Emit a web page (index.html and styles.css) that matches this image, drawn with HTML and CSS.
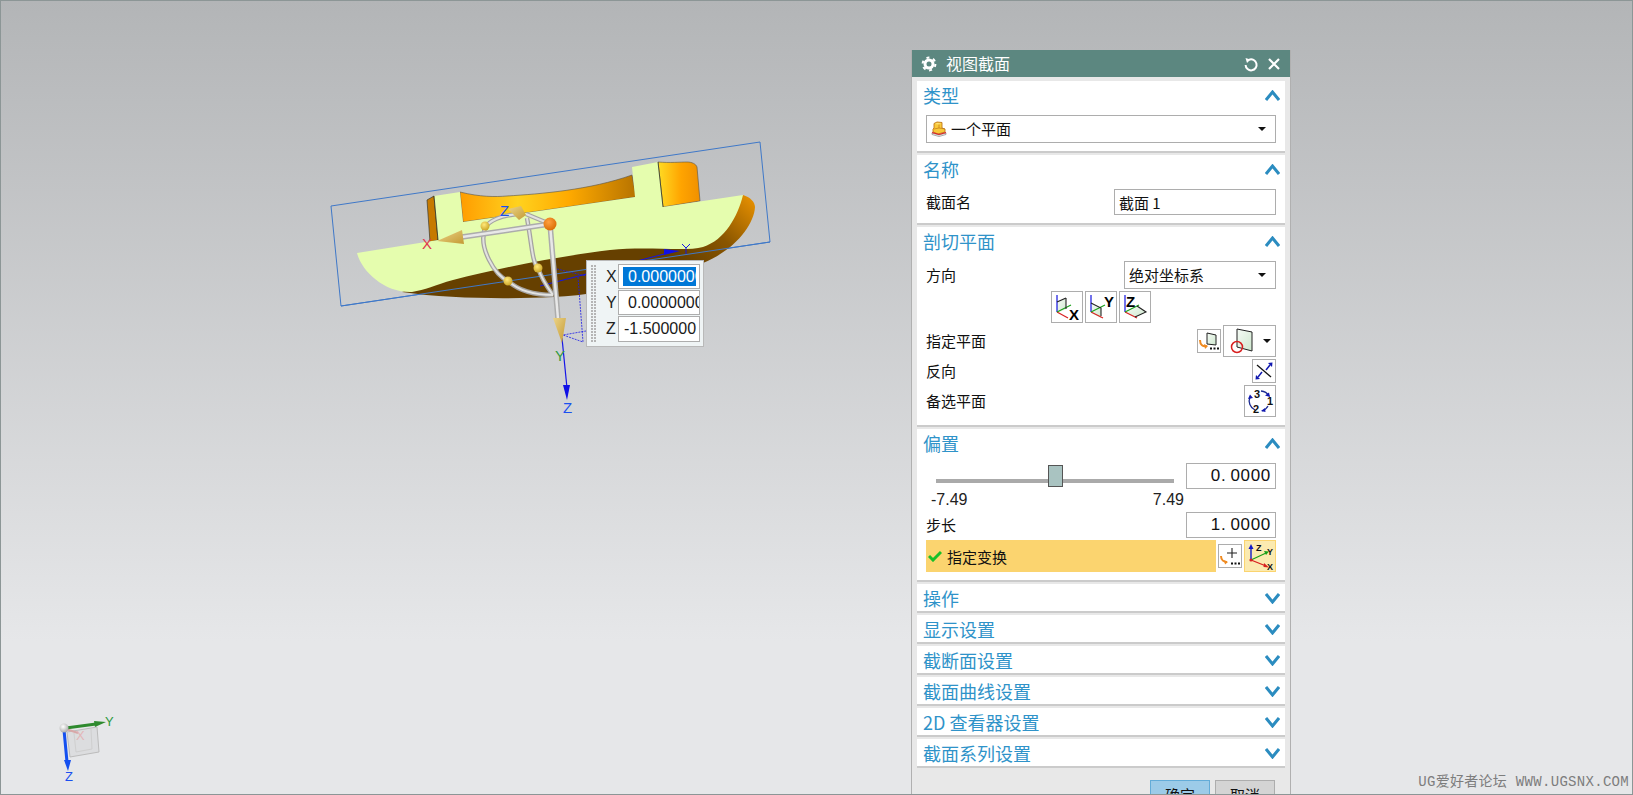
FILE: index.html
```html
<!DOCTYPE html>
<html lang="zh">
<head>
<meta charset="utf-8">
<title>视图截面</title>
<link rel="stylesheet" href="styles.css">
</head>
<body>
<main class="viewport">
  <svg class="scene" width="1633" height="795" viewBox="0 0 1633 795">
    <defs>
      <linearGradient id="band" gradientUnits="userSpaceOnUse" x1="460" y1="0" x2="635" y2="0">
        <stop offset="0" stop-color="#ff9c00"/><stop offset=".33" stop-color="#ffd21e"/><stop offset=".62" stop-color="#ffaa00"/><stop offset="1" stop-color="#b87400"/>
      </linearGradient>
      <linearGradient id="band2" gradientUnits="userSpaceOnUse" x1="658" y1="0" x2="700" y2="0">
        <stop offset="0" stop-color="#ffdc24"/><stop offset=".55" stop-color="#ffa400"/><stop offset="1" stop-color="#f09000"/>
      </linearGradient>
      <linearGradient id="rim" gradientUnits="userSpaceOnUse" x1="755" y1="205" x2="690" y2="270">
        <stop offset="0" stop-color="#e08c00"/><stop offset=".5" stop-color="#8a5600"/><stop offset="1" stop-color="#664000"/>
      </linearGradient>
      <linearGradient id="cone" x1="0" y1="0" x2="1" y2="1">
        <stop offset="0" stop-color="#ecd488"/><stop offset="1" stop-color="#c49a34"/>
      </linearGradient>
      <linearGradient id="planefill" x1="0" y1="0" x2="1" y2="1">
        <stop offset="0" stop-color="#f6fbf6"/><stop offset="1" stop-color="#cfe8cf"/>
      </linearGradient>
      <radialGradient id="ball" cx=".4" cy=".35" r=".7"><stop offset="0" stop-color="#ffe97a"/><stop offset="1" stop-color="#c9a222"/></radialGradient>
      <radialGradient id="ball2" cx=".4" cy=".35" r=".7"><stop offset="0" stop-color="#ffa040"/><stop offset="1" stop-color="#d86a00"/></radialGradient>
      <radialGradient id="ball3" cx=".4" cy=".35" r=".7"><stop offset="0" stop-color="#ffffff"/><stop offset="1" stop-color="#a8a8a8"/></radialGradient>
    </defs>

    <polygon class="bbox" points="331,206 760,142 770,242 341,306"/>

    <path class="band-left" d="M427 200L434 196L438 240L430 242Z"/>
    <path class="band-mid" d="M460 192C480 197 495 197 507 196C540 194 590 190 632 175L636 197L463 222Z"/>
    <path class="band-right" d="M658 162C670 163 680 162 687 162C692 162 696 164 697 167L700 201L663 207Z"/>
    <path class="rim" d="M743 195C750 197 755 202 755 207C754 225 735 250 703 263C660 275 620 294 553 297C510 299 450 299 402 292L500 250L703 240Z"/>
    <path class="face" d="M357 253L438 240L434 196L460 192L463 222L635 197L632 167L658 162L663 207L743 195C738 216 725 240 703 247C685 252 650 246 610 250C560 256 500 268 453 280C435 285 425 290 412 292C385 293 362 272 357 253Z"/>
    <path class="edge" d="M438 240L434 196M658 162L663 207"/>

    <path class="blue-thin" d="M540 286L668 253"/>
    <polygon class="blue-fill" points="664,249 680,251 664,255"/>
    <path class="blue-thin" d="M686 247L686 254M682 244L686 248L690 244"/>
    <path class="blue-dash" d="M557 269L586 276M578 277L583 342L563 335L586 331"/>
    <path class="blue-line" d="M562 338L567 388"/>
    <polygon class="blue-fill" points="563,385 570,385 567,400"/>
    <line class="bbox-over" x1="341" y1="306" x2="770" y2="242"/>

    <path class="arc" d="M524 214C500 214 488 222 485 228C478 248 495 275 508 281C520 292 535 295 553 295"/>
    <path class="arc" d="M527 218C532 245 532 262 538 268C542 280 548 288 553 295"/>
    <path class="arc" d="M526 214L550 224"/>
    <path class="arc-in" d="M524 214C500 214 488 222 485 228C478 248 495 275 508 281C520 292 535 295 553 295"/>
    <path class="arc-in" d="M527 218C532 245 532 262 538 268C542 280 548 288 553 295"/>
    <path class="arc-in" d="M526 214L550 224"/>
    <path class="shaft" d="M550 224L462 237"/>
    <path class="shaft" d="M550 224L558 319"/>
    <path class="shaft-in" d="M550 224L462 237"/>
    <path class="shaft-in" d="M550 224L558 319"/>
    <polygon class="cone" points="462,230 464,244 437,241"/>
    <polygon class="cone" points="508,209 521,206 526,215 519,220"/>
    <polygon class="cone" points="553,318 566,318 562,343"/>
    <circle cx="550" cy="224" r="6.5" fill="url(#ball2)"/>
    <circle cx="485" cy="226" r="4.5" fill="url(#ball)"/>
    <circle cx="538" cy="268" r="4.5" fill="url(#ball)"/>
    <circle cx="508" cy="281" r="4.5" fill="url(#ball)"/>
    <text class="lbl lbl-red" x="422" y="249">X</text>
    <text class="lbl lbl-blue" x="500" y="216">Z</text>
    <text class="lbl lbl-green" x="555" y="361">Y</text>
    <text class="lbl lbl-blue" x="563" y="413">Z</text>

    <g class="triad">
      <polygon class="tri-box" points="67,732 97,727 99,752 70,757"/>
      <path class="tri-in" d="M74 733L76 752M76 752L92 749M92 749L91 729"/>
      <path class="tri-red" d="M66 729L78 733"/>
      <text class="lbl-tri lbl-faint" x="76" y="740">X</text>
      <path class="tri-green" d="M66 728L96 724"/>
      <polygon class="tri-gfill" points="94,721 106,722 95,727"/>
      <path class="tri-blue" d="M64 730L67 762"/>
      <polygon class="tri-bfill" points="64,760 71,760 68,771"/>
      <circle cx="64" cy="728" r="4.5" fill="url(#ball3)"/>
      <text class="lbl-tri lbl-green" x="105" y="726">Y</text>
      <text class="lbl-tri lbl-blue" x="65" y="781">Z</text>
    </g>
  </svg>

  <div class="coords">
    <div class="grip"></div>
    <div class="coord-rows">
      <div class="coord-row"><span class="coord-label">X</span><div class="coord-input coord-sel"><span class="selected">0.0000000</span></div></div>
      <div class="coord-row"><span class="coord-label">Y</span><div class="coord-input"><span>0.0000000</span></div></div>
      <div class="coord-row"><span class="coord-label">Z</span><div class="coord-input coord-neg"><span>-1.500000</span></div></div>
    </div>
  </div>

  <aside class="dialog">
    <header class="dialog-title">
      <svg class="gear" width="16" height="16" viewBox="0 0 16 16"><circle cx="8" cy="8" r="4" class="gear-ring"/><circle cx="8" cy="8" r="6.400" class="gear-teeth"/></svg>
      <span class="dialog-name">视图截面</span>
      <svg class="tool" width="16" height="16" viewBox="0 0 16 16"><path class="white-stroke" d="M6 3.800A5.500 5.500 0 1 1 2.600 9"/><path class="white-fill" d="M2.500 2L7.500 3.500L4 7Z"/></svg>
      <svg class="tool" width="14" height="14" viewBox="0 0 14 14"><path class="white-x" d="M2 2L12 12M12 2L2 12"/></svg>
    </header>

    <section class="group">
      <div class="group-head"><h2>类型</h2><svg class="chev" width="15" height="11" viewBox="0 0 15 11"><path d="M1 10L7.500 2L14 10"/></svg></div>
      <div class="group-body">
        <div class="select select-wide">
          <svg class="select-icon" width="16" height="16" viewBox="0 0 16 16"><path fill="#f9c93a" stroke="#c07818" stroke-width=".9" d="M3 7V2.500L6 1L11 1.500V7L14 8V11L7 13L2 11V8Z"/><path fill="#fde47e" d="M4 3L6 2L10 2.500L8 3.500Z"/><path fill="none" stroke="#c07818" stroke-width=".7" d="M8 3.500V7M3 8L8 7L14 8"/><path fill="#f2f2f2" stroke="#777" stroke-width=".6" d="M1 12L8 14L15 12V13.500L8 15.500L1 13.500Z"/><path stroke="#d22" stroke-width="1.200" fill="none" d="M1 11.500L8 13.500L15 11.500"/></svg>
          <span class="select-text">一个平面</span>
          <i class="caret"></i>
        </div>
      </div>
    </section>

    <section class="group">
      <div class="group-head"><h2>名称</h2><svg class="chev" width="15" height="11" viewBox="0 0 15 11"><path d="M1 10L7.500 2L14 10"/></svg></div>
      <div class="group-body">
        <div class="row">
          <span class="label">截面名</span>
          <div class="field field-name">截面 1</div>
        </div>
      </div>
    </section>

    <section class="group">
      <div class="group-head"><h2>剖切平面</h2><svg class="chev" width="15" height="11" viewBox="0 0 15 11"><path d="M1 10L7.500 2L14 10"/></svg></div>
      <div class="group-body">
        <div class="row">
          <span class="label">方向</span>
          <div class="select select-dir"><span class="select-text">绝对坐标系</span><i class="caret"></i></div>
        </div>
        <div class="row row-center">
          <button class="icon-btn b32"><svg width="30" height="30" viewBox="0 0 30 30"><path d="M5 10L14 6V17L5 21Z" class="pl"/><path d="M5 3V20" class="ax-b"/><path d="M5 20L16 26" class="ax-r"/><path d="M5 20L19 13" class="ax-g"/><path d="M14 6L5 10" class="ax-k"/><path d="M14 6V17" class="ax-k"/><text x="17" y="28" class="bigl">X</text></svg></button>
          <button class="icon-btn b32"><svg width="30" height="30" viewBox="0 0 30 30"><path d="M5 11L15 16V26L5 21Z" class="pl"/><path d="M5 3V20" class="ax-b"/><path d="M5 20L17 26" class="ax-r"/><path d="M5 20L19 13" class="ax-g"/><path d="M5 11L15 16V24" class="ax-k"/><text x="18" y="15" class="bigl">Y</text></svg></button>
          <button class="icon-btn b32"><svg width="30" height="30" viewBox="0 0 30 30"><path d="M5 20L17 14L26 20L15 25Z" class="pl"/><path d="M5 3V20" class="ax-b"/><path d="M5 20L17 26" class="ax-r"/><path d="M5 20L19 13" class="ax-g"/><path d="M17 14L26 20L15 25" class="ax-k"/><text x="6" y="15" class="bigl">Z</text></svg></button>
        </div>
        <div class="row">
          <span class="label">指定平面</span>
          <button class="icon-btn b24"><svg width="22" height="22" viewBox="0 0 22 22"><path d="M9 3L18 5V15L9 14Z" class="pl-k"/><path d="M2 10C2 15 5 17 9 16" class="orange"/><path d="M6 14L10 16L7 19Z" class="orange-fill"/><path d="M12 18.500h2M15.500 18.500h2M19 18.500h2" class="dots"/></svg></button>
          <button class="icon-btn big-plane"><svg width="30" height="30" viewBox="0 0 30 30"><path d="M11 3L26 6V25L11 21Z" class="pl-k"/><circle cx="11" cy="21" r="5.500" class="red-ring"/></svg><i class="caret"></i></button>
        </div>
        <div class="row">
          <span class="label">反向</span>
          <button class="icon-btn b24"><svg width="22" height="22" viewBox="0 0 22 22"><path d="M4 5L18 17" class="ax-k2"/><path d="M13 10L17 5" class="navy"/><path d="M15 3L19.500 2.500L19 7Z" class="navy-fill"/><path d="M9 12L5 17" class="navy"/><path d="M3 15L2.500 19.500L7 19Z" class="navy-fill"/></svg></button>
        </div>
        <div class="row">
          <span class="label">备选平面</span>
          <button class="icon-btn b32"><svg width="30" height="30" viewBox="0 0 30 30"><path d="M16 5A10 10 0 0 1 24 10" class="navy-thin"/><path d="M23 20A10 10 0 0 1 17 25" class="navy-thin"/><path d="M10 24A10 10 0 0 1 5 11" class="navy-thin"/><path d="M25 11L20 9.500L24 6.500Z" class="navy-fill"/><path d="M16 25L20 22L20.500 26Z" class="navy-fill"/><path d="M3 13L5 8.500L8 12Z" class="navy-fill"/><text x="9" y="12" class="num">3</text><text x="22" y="19" class="num">1</text><text x="8" y="27" class="num">2</text></svg></button>
        </div>
      </div>
    </section>

    <section class="group">
      <div class="group-head"><h2>偏置</h2><svg class="chev" width="15" height="11" viewBox="0 0 15 11"><path d="M1 10L7.500 2L14 10"/></svg></div>
      <div class="group-body">
        <div class="row slider-row">
          <div class="slider"><div class="track"><div class="thumb"></div></div></div>
          <div class="field field-num">0<span class="dot">.</span>0000</div>
        </div>
        <div class="range"><span>-7.49</span><span>7.49</span></div>
        <div class="row">
          <span class="label">步长</span>
          <div class="field field-num">1<span class="dot">.</span>0000</div>
        </div>
        <div class="row row-spec">
          <div class="spec">
            <svg width="14" height="12" viewBox="0 0 14 12"><path d="M1 6L5 10L13 2" class="check"/></svg>
            <span class="spec-text">指定变换</span>
          </div>
          <button class="icon-btn b24"><svg width="22" height="22" viewBox="0 0 22 22"><path d="M13 3V13M8 8H18" class="ax-k"/><path d="M2 11C2 15 5 17 8 17" class="orange"/><path d="M5 15L9 17L6 19.500Z" class="orange-fill"/><path d="M12 18.500h2M15.500 18.500h2M19 18.500h2" class="dots"/></svg></button>
          <button class="icon-btn axis-btn"><svg width="30" height="30" viewBox="0 0 30 30"><path d="M6 19V6" class="ax-b2"/><path d="M3.500 8L6 3L8.500 8Z" fill="#1018c8"/><path d="M6 19L21 12" class="ax-g"/><path d="M19 10L24 10.500L21 14Z" fill="#18a018"/><path d="M6 19L21 25" class="ax-r"/><path d="M19 22L24 26.500L18.500 26Z" fill="#d82020"/><circle cx="6" cy="19" r="1.600" fill="#d82020"/><text x="11" y="10" class="axl">Z</text><text x="22" y="14" class="axl">Y</text><text x="22" y="28.500" class="axl">X</text></svg></button>
        </div>
      </div>
    </section>

    <section class="group"><div class="group-head"><h2>操作</h2><svg class="chev" width="15" height="11" viewBox="0 0 15 11"><path d="M1 1L7.500 9L14 1"/></svg></div></section>
    <section class="group"><div class="group-head"><h2>显示设置</h2><svg class="chev" width="15" height="11" viewBox="0 0 15 11"><path d="M1 1L7.500 9L14 1"/></svg></div></section>
    <section class="group"><div class="group-head"><h2>截断面设置</h2><svg class="chev" width="15" height="11" viewBox="0 0 15 11"><path d="M1 1L7.500 9L14 1"/></svg></div></section>
    <section class="group"><div class="group-head"><h2>截面曲线设置</h2><svg class="chev" width="15" height="11" viewBox="0 0 15 11"><path d="M1 1L7.500 9L14 1"/></svg></div></section>
    <section class="group"><div class="group-head"><h2>2D 查看器设置</h2><svg class="chev" width="15" height="11" viewBox="0 0 15 11"><path d="M1 1L7.500 9L14 1"/></svg></div></section>
    <section class="group"><div class="group-head"><h2>截面系列设置</h2><svg class="chev" width="15" height="11" viewBox="0 0 15 11"><path d="M1 1L7.500 9L14 1"/></svg></div></section>

    <footer class="dialog-foot">
      <button class="cmd cmd-ok">确定</button>
      <button class="cmd">取消</button>
    </footer>
  </aside>

  <div class="watermark">UG爱好者论坛 WWW.UGSNX.COM</div>
</main>
</body>
</html>
```

FILE: styles.css
```css
* { box-sizing: border-box; }
html, body { margin: 0; padding: 0; height: 100%; overflow: hidden; }
body { font-family: "Noto Sans CJK SC", "Liberation Sans", sans-serif; }

.viewport {
  position: relative;
  width: 1633px;
  height: 795px;
  overflow: hidden;
  border: 1px solid #8c9696;
  background: linear-gradient(180deg, #b3b5b7 0, #e6e7e9 640px);
}

/* 3D scene */
.scene { position: absolute; left: -1px; top: -1px; }
.bbox { fill: none; stroke: #3f78c8; stroke-width: 1; }
.bbox-over { stroke: #3f78c8; stroke-width: 1; }
.band-left { fill: #c67a00; stroke: #3a3a30; stroke-width: .7; }
.band-mid { fill: url(#band); stroke: #55534a; stroke-width: .6; }
.band-right { fill: url(#band2); stroke: #55534a; stroke-width: .6; }
.rim { fill: url(#rim); }
.face { fill: #e5fdae; }
.edge { fill: none; stroke: #2e2e20; stroke-width: .8; }
.blue-thin { stroke: #1414e8; stroke-width: 1; fill: none; }
.blue-line { stroke: #1414e8; stroke-width: 1.2; fill: none; }
.blue-fill { fill: #1010e6; }
.blue-dash { stroke: #1a1ae8; stroke-width: .8; stroke-dasharray: 2 1; fill: none; }
.arc { fill: none; stroke: #a5a3a1; stroke-width: 4.5; }
.arc-in { fill: none; stroke: #e2e2e0; stroke-width: 2; }
.shaft { fill: none; stroke: #acacac; stroke-width: 5.5; }
.shaft-in { fill: none; stroke: #e8e8e8; stroke-width: 2.5; }
.cone { fill: url(#cone); }
.lbl { font: 15px "Liberation Sans", sans-serif; }
.lbl-red { fill: #e03850; }
.lbl-blue { fill: #1a50f0; }
.lbl-green { fill: #2e9a40; }
.lbl-tri { font: 13px "Liberation Sans", sans-serif; }
.lbl-faint { fill: #e3b6b8; }
.tri-box { fill: #dcdddf; stroke: #bcbcbc; stroke-width: 1; }
.tri-in { fill: none; stroke: #cfcfcf; stroke-width: 1; }
.tri-red { stroke: #d8a8a8; stroke-width: 2; }
.tri-green { stroke: #2e8a2e; stroke-width: 3; }
.tri-gfill { fill: #2e8a2e; }
.tri-blue { stroke: #1450f0; stroke-width: 3; }
.tri-bfill { fill: #1450f0; }

/* floating coordinates */
.coords {
  position: absolute;
  left: 585px;
  top: 259px;
  width: 118px;
  height: 87px;
  display: flex;
  background: #eff4f5;
  border: 1px solid #b9b9b9;
  padding: 3px;
}
.grip {
  flex: none;
  width: 6px;
  margin-right: 8px;
  background-color: #b5b5b5;
  background-image: linear-gradient(90deg, #eff4f5 1px, transparent 1px), linear-gradient(#eff4f5 1px, transparent 1px);
  background-size: 3px 3px;
}
.coord-rows { flex: 1; display: flex; flex-direction: column; gap: 1px; }
.coord-row { display: flex; flex: 0 0 25px; align-items: center; }
.coord-row:last-child { flex: 0 0 26px; }
.coord-label { flex: none; width: 14px; padding-left: 2px; font: 16px "Liberation Sans", sans-serif; color: #222; }
.coord-input {
  flex: none;
  width: 82px;
  height: 100%;
  overflow: hidden;
  white-space: nowrap;
  background: #fff;
  border: 1px solid #adadad;
  padding: 2px 0 2px 9px;
  font: 16px/19px "Liberation Sans", sans-serif;
  color: #1a1a1a;
  text-align: left;
}
.coord-sel { padding: 2px 2px 2px 4px; }
.coord-neg { padding-left: 5px; }
.selected { display: inline-block; vertical-align: top; width: 73px; overflow: hidden; background: #0078d7; color: #fff; padding-left: 5px; }

/* dialog */
.dialog {
  position: absolute;
  left: 910px;
  top: 49px;
  width: 380px;
  background: #e8e8e8;
  border-left: 1px solid #b0b0b0;
  border-right: 1px solid #b0b0b0;
}
.dialog-title {
  height: 27px;
  display: flex;
  align-items: center;
  background: #5c8780;
  color: #fff;
  padding: 0 9px 0 9px;
  margin-bottom: 4px;
}
.gear { margin-right: 9px; }
.gear-ring { fill: none; stroke: #fff; stroke-width: 3; }
.gear-teeth { fill: none; stroke: #fff; stroke-width: 2; stroke-dasharray: 3 3.700; }
.dialog-name { font-size: 16px; flex: 1; line-height: 27px; }
.tool { margin-left: 8px; }
.white-stroke { fill: none; stroke: #fff; stroke-width: 2; }
.white-fill { fill: #fff; }
.white-x { fill: none; stroke: #fff; stroke-width: 2.200; }

.group {
  margin: 0 5px 2px 5px;
  background: #fff;
  border-bottom: 2px solid #cbcbcb;
}
.group-head {
  height: 27px;
  display: flex;
  align-items: center;
  justify-content: space-between;
  padding: 1px 5px 0 6px;
}
.group-head h2 {
  margin: 0;
  font-size: 18px;
  font-weight: 400;
  line-height: 26px;
  color: #2f93c9;
}
.chev path { fill: none; stroke: #2b8cc0; stroke-width: 3; }
.group-body {
  display: flex;
  flex-direction: column;
  gap: 2px;
  padding: 7px 9px 8px;
}
.row { display: flex; align-items: center; justify-content: flex-end; gap: 2px; }
.row-center { justify-content: center; }
.label { margin-right: auto; font-size: 15px; line-height: 20px; color: #111; }

.select {
  height: 28px;
  display: flex;
  align-items: center;
  border: 1px solid #adadad;
  background: #fff;
  padding: 0 9px 0 4px;
}
.select-wide { width: 100%; }
.select-dir { width: 152px; }
.select-icon { margin-right: 4px; }
.select-text { flex: 1; font-size: 15px; line-height: 20px; color: #111; }
.caret {
  display: inline-block;
  width: 0;
  height: 0;
  border-left: 4px solid transparent;
  border-right: 4px solid transparent;
  border-top: 4px solid #111;
}
.field {
  height: 26px;
  background: #fff;
  border: 1px solid #adadad;
  color: #111;
  display: flex;
  align-items: center;
}
.field-name { width: 162px; padding-left: 4px; font-size: 15px; }
.field-num {
  width: 90px;
  justify-content: flex-end;
  padding-right: 4px;
  font: 17px "Liberation Sans", sans-serif;
  letter-spacing: .7px;
}
.dot { margin-right: 4px; }

.icon-btn {
  display: flex;
  align-items: center;
  justify-content: center;
  padding: 0;
  background: #fff;
  border: 1px solid #adadad;
  flex: none;
}
.b32 { width: 32px; height: 32px; }
.b24 { width: 24px; height: 24px; }
.big-plane { width: 53px; height: 32px; padding-left: 2px; justify-content: flex-start; gap: 7px; }
.axis-btn { width: 32px; height: 32px; background: #fbeab0; border-color: #fbd46f; }

.pl { fill: url(#planefill); }
.pl-k { fill: url(#planefill); stroke: #222; stroke-width: 1; }
.ax-b { stroke: #1414e0; stroke-width: 1.200; fill: none; }
.ax-b2 { stroke: #1018c8; stroke-width: 1.400; fill: none; }
.ax-r { stroke: #d82020; stroke-width: 1.200; fill: none; }
.ax-g { stroke: #18a018; stroke-width: 1.200; fill: none; }
.ax-k { stroke: #222; stroke-width: 1.100; fill: none; }
.ax-k2 { stroke: #111; stroke-width: 1.300; fill: none; }
.bigl { font: bold 15px "Liberation Sans", sans-serif; fill: #000; }
.axl { font: bold 9px "Liberation Sans", sans-serif; fill: #111; }
.num { font: bold 11px "Liberation Sans", sans-serif; fill: #111; }
.orange { fill: none; stroke: #ef8a20; stroke-width: 2; }
.orange-fill { fill: #ef8a20; }
.dots { stroke: #111; stroke-width: 2; fill: none; }
.red-ring { fill: none; stroke: #d82020; stroke-width: 1.500; }
.navy { stroke: #1018b0; stroke-width: 1.500; fill: none; }
.navy-thin { stroke: #1a2a90; stroke-width: 1.300; fill: none; }
.navy-fill { fill: #1018b0; }

.slider-row { gap: 0; }
.slider { flex: 1; height: 26px; padding: 16px 12px 0 10px; }
.track {
  height: 4px;
  background: #aaa;
  display: flex;
  justify-content: center;
  align-items: flex-start;
}
.thumb {
  width: 15px;
  height: 22px;
  margin-top: -14px;
  background: #a9c3c1;
  border: 1px solid #555;
  flex: none;
}
.range {
  height: 21px;
  margin-top: -2px;
  display: flex;
  justify-content: space-between;
  padding: 0 92px 0 5px;
  font: 16px/21px "Liberation Sans", sans-serif;
  color: #222;
}
.row-spec { gap: 2px; }
.spec {
  flex: 1;
  height: 32px;
  background: #fbd46f;
  display: flex;
  align-items: center;
  gap: 5px;
  padding-left: 2px;
}
.check { fill: none; stroke: #18c028; stroke-width: 3; }
.spec-text { font-size: 15px; color: #111; }

.dialog-foot {
  display: flex;
  justify-content: flex-end;
  gap: 5px;
  padding: 10px 15px 0 0;
}
.cmd {
  width: 60px;
  height: 28px;
  padding: 0;
  background: #d4d4d4;
  border: 1px solid #adadad;
  font: 15px "Noto Sans CJK SC", sans-serif;
  color: #111;
}
.cmd-ok { background: #9ccbe8; border-color: #63acd8; }

.watermark {
  position: absolute;
  right: 3px;
  bottom: 3px;
  font: 14px/18px "Liberation Mono", "Noto Sans CJK SC", monospace;
  letter-spacing: .3px;
  color: #7d7d7d;
  white-space: nowrap;
}
```
